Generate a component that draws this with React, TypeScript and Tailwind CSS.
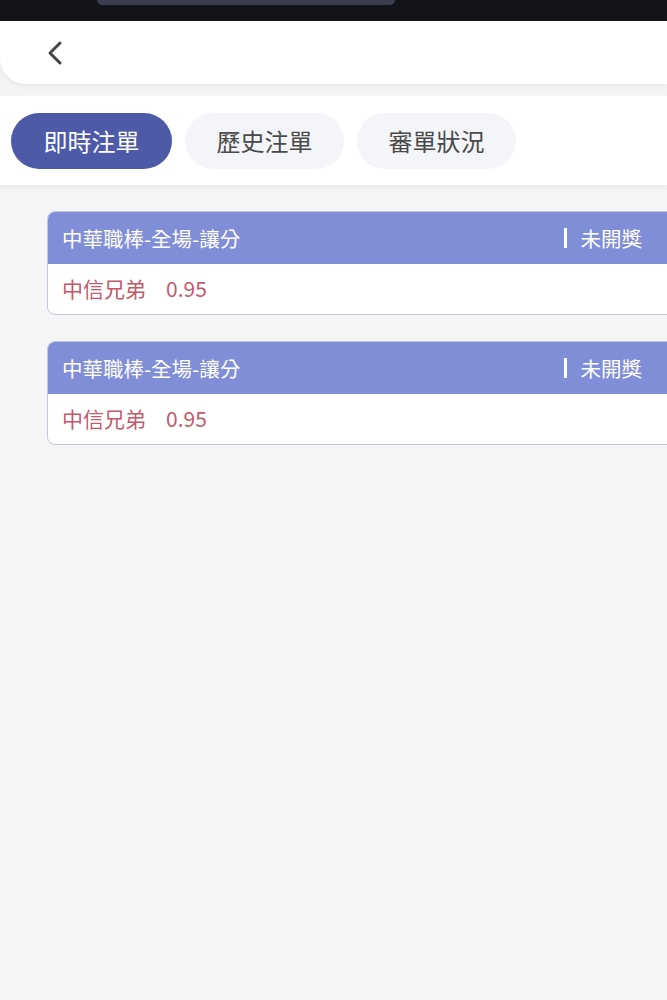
import { ChevronLeft } from 'lucide-react'

const tabs = ['即時注單', '歷史注單', '審單狀況']

const bets = [
  { title: '中華職棒-全場-讓分', status: '未開獎', team: '中信兄弟', odds: '0.95' },
  { title: '中華職棒-全場-讓分', status: '未開獎', team: '中信兄弟', odds: '0.95' },
]

function BetCard({ title, status, team, odds }: (typeof bets)[number]) {
  return (
    <div className="ml-[47px] w-[650px] overflow-hidden rounded-lg border border-[#c3c7de] bg-white">
      <div className="flex h-[52px] items-center justify-between bg-[#7f8ed6] pl-[14px] pr-[54px] text-[20.5px] text-white">
        <span>{title}</span>
        <span className="flex items-center gap-[14px]">
          <span className="h-[20px] w-[3px] bg-white" />
          {status}
        </span>
      </div>
      <div className="flex h-[50px] items-center gap-[20px] pl-[14px] text-[21px] text-[#c4596a]">
        <span>{team}</span>
        <span>{odds}</span>
      </div>
    </div>
  )
}

export default function App() {
  return (
    <div
      className="min-h-[1000px] w-[667px] overflow-hidden bg-[#f5f5f6]"
      style={{ fontFamily: '"Noto Sans CJK TC", "Noto Sans", sans-serif' }}
    >
      {/* status bar */}
      <div className="flex h-[21px] bg-[#131418] pl-[97px]">
        <div className="h-[5px] w-[298px] rounded-b-[14px] bg-[#3b3e50]" />
      </div>

      {/* header */}
      <div className="flex h-[63px] items-center rounded-bl-[26px] bg-white pl-[35px] shadow-[0_3px_6px_rgba(0,0,0,0.06)]">
        <ChevronLeft className="h-[40px] w-[40px] text-[#444]" strokeWidth={1.8} />
      </div>

      {/* tabs */}
      <div className="mt-[12px] flex h-[89px] items-center gap-[13px] bg-white pl-[11px] shadow-[0_3px_6px_rgba(0,0,0,0.05)]">
        {tabs.map((t, i) => (
          <button
            key={t}
            className={
              i === 0
                ? 'h-[56px] w-[161px] rounded-full bg-[#4c5aa8] text-[24px] text-white'
                : 'h-[56px] w-[159px] rounded-full bg-[#f4f5f9] text-[24px] text-[#4a4a4a]'
            }
          >
            {t}
          </button>
        ))}
      </div>

      <div className="flex flex-col gap-[26px] pt-[26px]">
        {bets.map((b, i) => (
          <BetCard key={i} {...b} />
        ))}
      </div>
    </div>
  )
}
